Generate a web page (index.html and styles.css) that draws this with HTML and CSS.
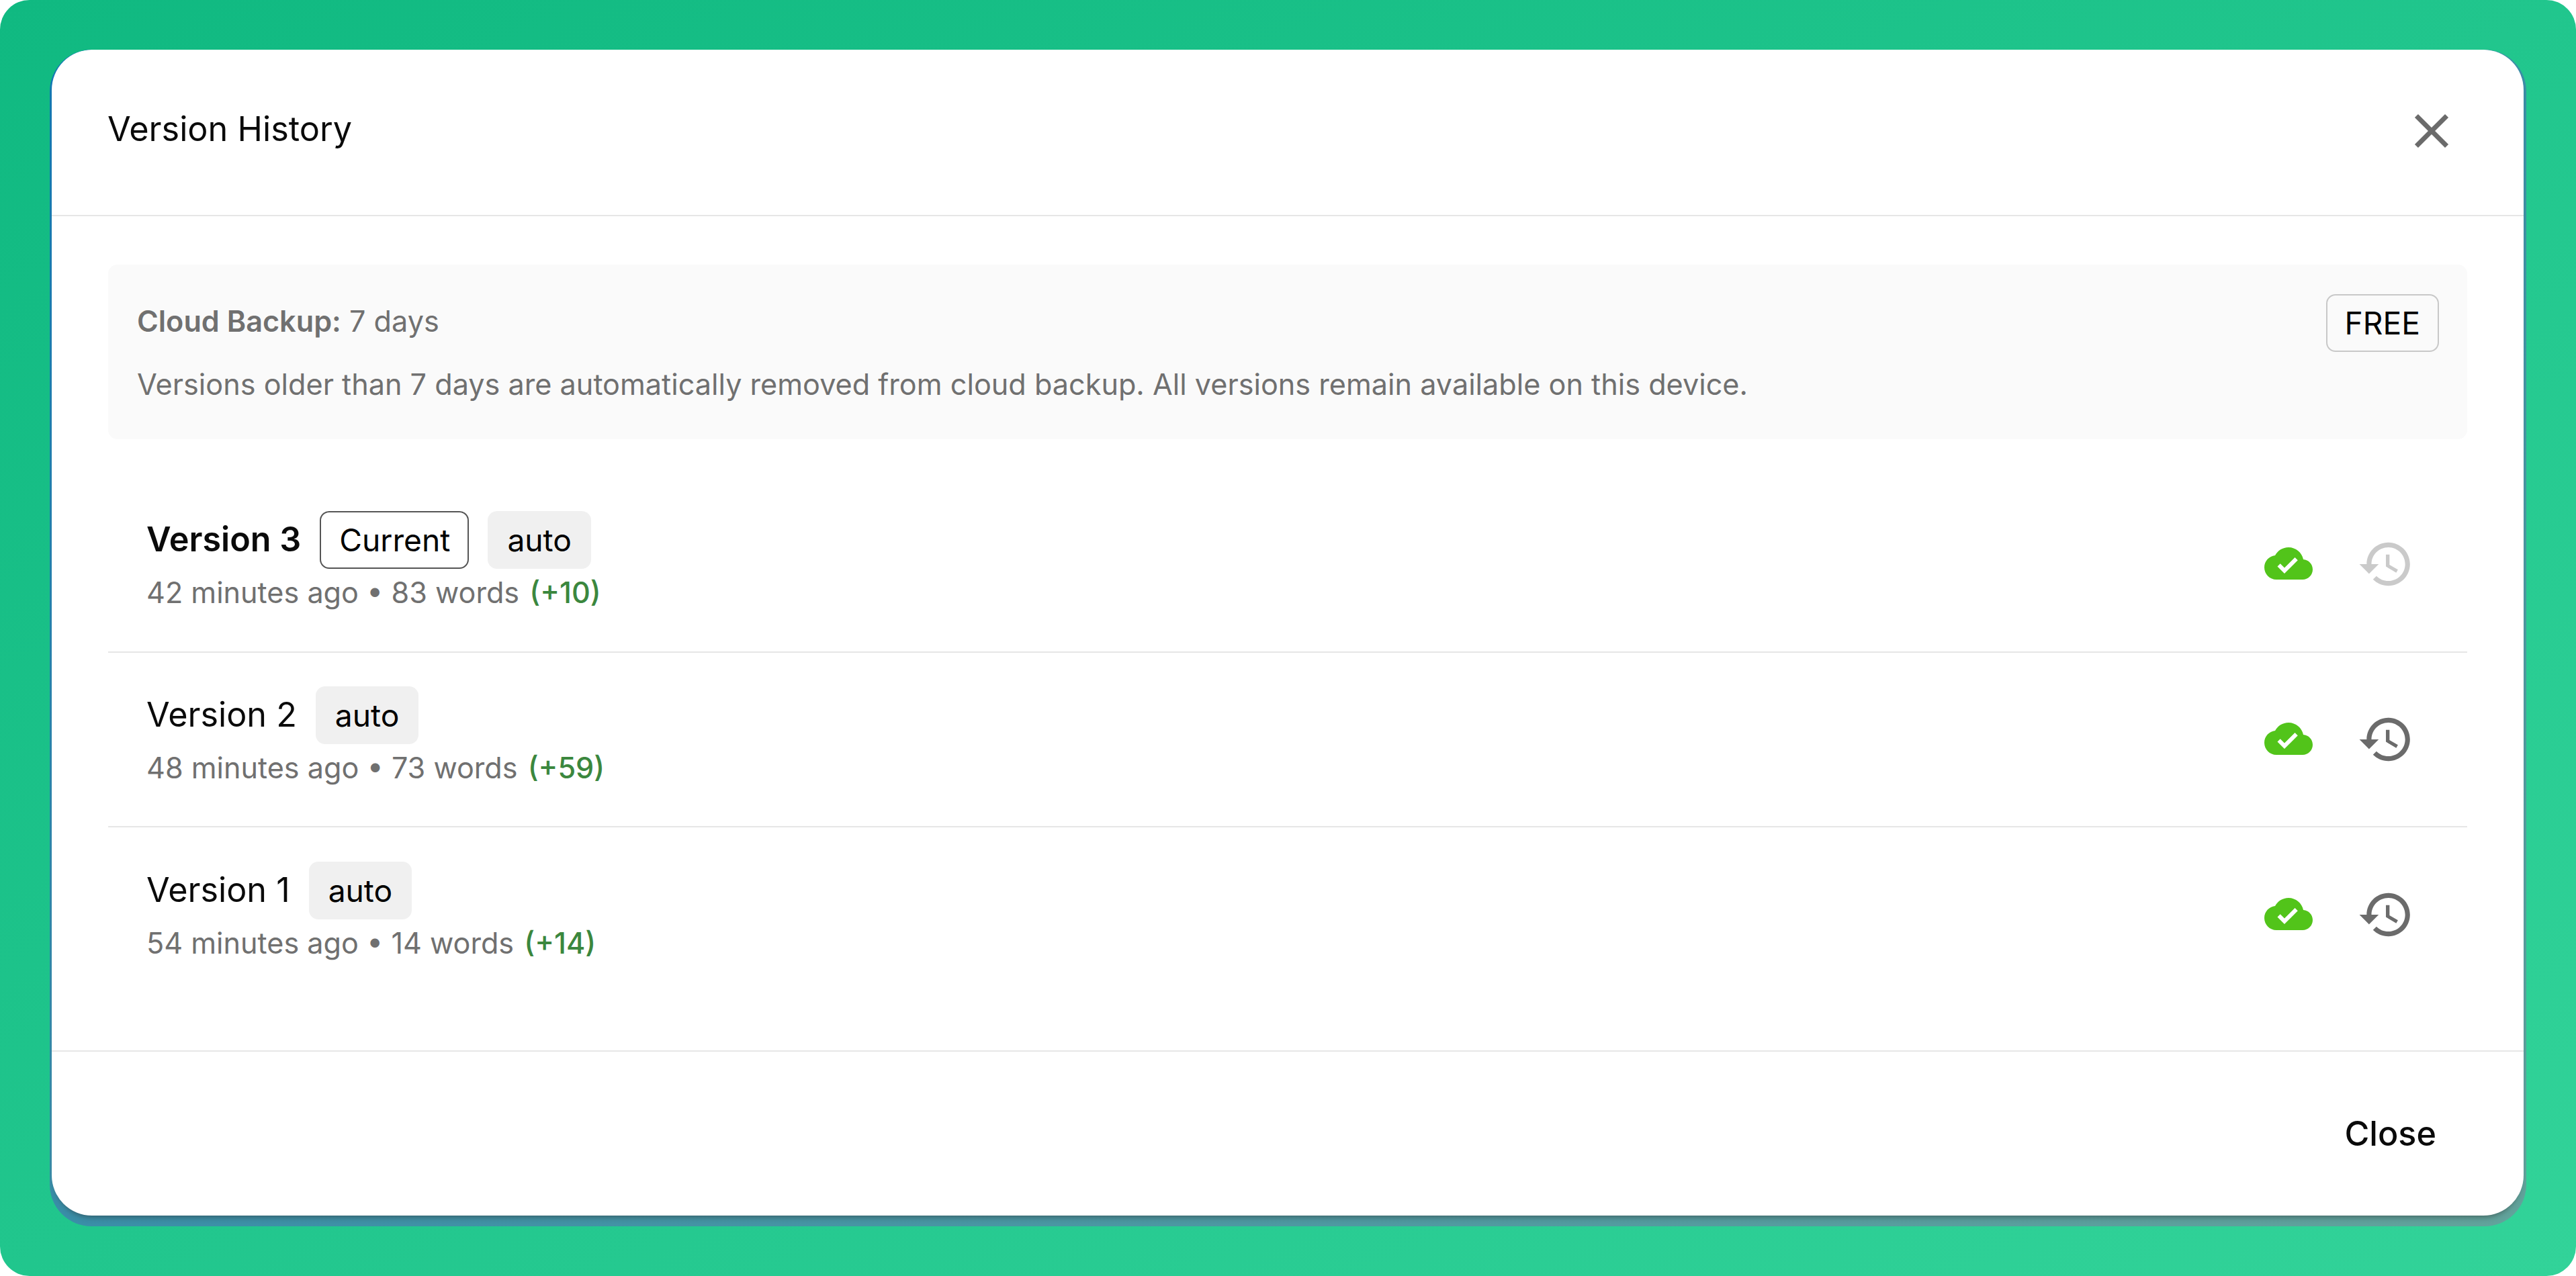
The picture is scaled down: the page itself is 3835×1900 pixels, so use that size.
FILE: index.html
```html
<!DOCTYPE html>
<html lang="en">
<head>
    <meta charset="UTF-8">
    <meta name="viewport" content="width=device-width, initial-scale=1.0">
    <title>Version History</title>
    <link rel="stylesheet" href="styles.css">
</head>
<body>
    <!-- shared icons -->
    <svg class="icon-defs">
        <symbol id="icon-cloud-done" viewBox="0 0 24 24">
            <path d="M19.35 10.04C18.67 6.59 15.64 4 12 4 9.11 4 6.6 5.64 5.35 8.04 2.34 8.36 0 10.91 0 14c0 3.31 2.69 6 6 6h13c2.76 0 5-2.24 5-5 0-2.64-2.05-4.78-4.65-4.96zM10 17l-3.5-3.5 1.41-1.41L10 14.17 15.18 9l1.41 1.41L10 17z"/>
        </symbol>
        <symbol id="icon-restore" viewBox="0 0 24 24">
            <path d="M13 3c-4.97 0-9 4.03-9 9H1l3.89 3.89.07.14L9 12H6c0-3.87 3.13-7 7-7s7 3.13 7 7-3.13 7-7 7c-1.93 0-3.68-.79-4.94-2.06l-1.42 1.42C8.27 19.99 10.51 21 13 21c4.97 0 9-4.03 9-9s-4.03-9-9-9zm-1 5v5l4.28 2.54.72-1.21-3.5-2.08V8H12z"/>
        </symbol>
        <symbol id="icon-close" viewBox="0 0 24 24">
            <path d="M19 6.41 17.59 5 12 10.59 6.41 5 5 6.41 10.59 12 5 17.59 6.41 19 12 13.41 17.59 19 19 17.59 13.41 12z"/>
        </symbol>
    </svg>

    <div class="backdrop">
        <div class="frame">
            <div class="dialog">
                <div class="dialog-header">
                    <h2>Version History</h2>
                    <button class="icon-btn" aria-label="Close dialog">
                        <svg><use href="#icon-close"/></svg>
                    </button>
                </div>

                <div class="dialog-body">
                    <div class="info">
                        <div class="info-text">
                            <p><strong>Cloud Backup:</strong> 7 days</p>
                            <p>Versions older than 7 days are automatically removed from cloud backup. All versions remain available on this device.</p>
                        </div>
                        <span class="chip plan">FREE</span>
                    </div>

                    <ul class="versions">
                        <li class="version active">
                            <div class="details">
                                <div class="title"><span class="name">Version 3</span><span class="chip current">Current</span><span class="chip auto">auto</span></div>
                                <div class="meta">42 minutes ago • 83 words <span class="diff">(+10)</span></div>
                            </div>
                            <svg class="cloud"><use href="#icon-cloud-done"/></svg>
                            <button class="icon-btn" aria-label="Restore" disabled>
                                <svg><use href="#icon-restore"/></svg>
                            </button>
                        </li>
                        <li class="version">
                            <div class="details">
                                <div class="title"><span class="name">Version 2</span><span class="chip auto">auto</span></div>
                                <div class="meta">48 minutes ago • 73 words <span class="diff">(+59)</span></div>
                            </div>
                            <svg class="cloud"><use href="#icon-cloud-done"/></svg>
                            <button class="icon-btn" aria-label="Restore">
                                <svg><use href="#icon-restore"/></svg>
                            </button>
                        </li>
                        <li class="version">
                            <div class="details">
                                <div class="title"><span class="name">Version 1</span><span class="chip auto">auto</span></div>
                                <div class="meta">54 minutes ago • 14 words <span class="diff">(+14)</span></div>
                            </div>
                            <svg class="cloud"><use href="#icon-cloud-done"/></svg>
                            <button class="icon-btn" aria-label="Restore">
                                <svg><use href="#icon-restore"/></svg>
                            </button>
                        </li>
                    </ul>
                </div>

                <div class="dialog-footer">
                    <button class="close-btn">Close</button>
                </div>
            </div>
        </div>
    </div>
</body>
</html>
```

FILE: styles.css
```css
* {
    box-sizing: border-box;
}

body {
    margin: 0;
    background: #fff;
    font-family: Inter, "Liberation Sans", sans-serif;
    color: #0a0a0a;
}

h2, p, ul {
    margin: 0;
    padding: 0;
}

button {
    border: none;
    background: none;
    padding: 0;
    font-family: inherit;
    color: inherit;
}

.icon-defs {
    display: none;
}

.backdrop {
    height: 1900px;
    padding: 74px;
    border-radius: 44px;
    background: linear-gradient(to bottom right, #10b981, #32d399);
}

.frame {
    height: 1752px;
    padding: 0 4px 16px 3px;
    border-radius: 62px;
    overflow: hidden;
    background: linear-gradient(to bottom right, #1279b4, #62a39b);
}

.dialog {
    display: flex;
    flex-direction: column;
    height: 1736px;
    border-radius: 60px;
    background: #fff;
    box-shadow: 0 8px 8px -6px rgba(40, 40, 40, 0.5);
}

.dialog-header {
    display: flex;
    align-items: center;
    justify-content: space-between;
    height: 248px;
    padding: 0 94px 5px 83px;
    border-bottom: 2px solid #e6e6e6;
}

.dialog-header h2 {
    padding-bottom: 5px;
    font-size: 50.4px;
    font-weight: 400;
    line-height: 80px;
}

.icon-btn {
    width: 86px;
    height: 86px;
    color: #6b6b6b;
}

.icon-btn svg {
    display: block;
    width: 86px;
    height: 86px;
    fill: currentColor;
}

.icon-btn:disabled {
    color: #cacaca;
}

.dialog-body {
    flex: 1;
    padding: 72px 84px 0;
}

.info {
    display: flex;
    justify-content: space-between;
    align-items: flex-start;
    height: 260px;
    padding: 44px 42px 0 43px;
    border-radius: 14px;
    background: #fafafa;
}

.info-text {
    padding-top: 8px;
    font-size: 43.19px;
    line-height: 64px;
    color: #707070;
}

.info-text p + p {
    margin-top: 30px;
}

.info-text strong {
    font-weight: 600;
}

.chip {
    display: inline-flex;
    align-items: center;
    height: 86px;
    padding: 0 27px;
    border: 2px solid transparent;
    border-radius: 14px;
    font-size: 46.2px;
    color: #000;
}

.chip.plan {
    padding: 0 26px 0 25px;
    border-color: #c8c8c8;
}

.chip.current {
    padding: 0 26px 0 27px;
    border-color: #555;
}

.chip.auto {
    background: #f0f0f0;
}

.versions {
    padding-top: 56px;
    list-style: none;
}

.version {
    display: flex;
    align-items: center;
    height: 262px;
    padding: 0 78px 0 57px;
    border-bottom: 2px solid #e6e6e6;
}

.version + .version {
    height: 260px;
}

.version:last-child {
    border-bottom: none;
}

.details {
    flex: 1;
}

.title {
    display: flex;
    align-items: center;
    gap: 28px;
    font-size: 50.3px;
}

.name {
    padding-bottom: 3px;
}

.active .name {
    padding-bottom: 4px;
    font-weight: 600;
}

.meta {
    padding-bottom: 2px;
    font-size: 43.17px;
    line-height: 70px;
    color: #707070;
}

.diff {
    margin-left: 3px;
    font-weight: 500;
    color: #3b873e;
}

.cloud {
    width: 72px;
    height: 72px;
    margin: 0 66px 2px 0;
    fill: #52c41a;
}

.dialog-footer {
    display: flex;
    align-items: center;
    justify-content: flex-end;
    height: 246px;
    padding: 0 130px 1px 0;
    border-top: 2px solid #e6e6e6;
}

.close-btn {
    font-size: 50.3px;
    font-weight: 500;
}
```
